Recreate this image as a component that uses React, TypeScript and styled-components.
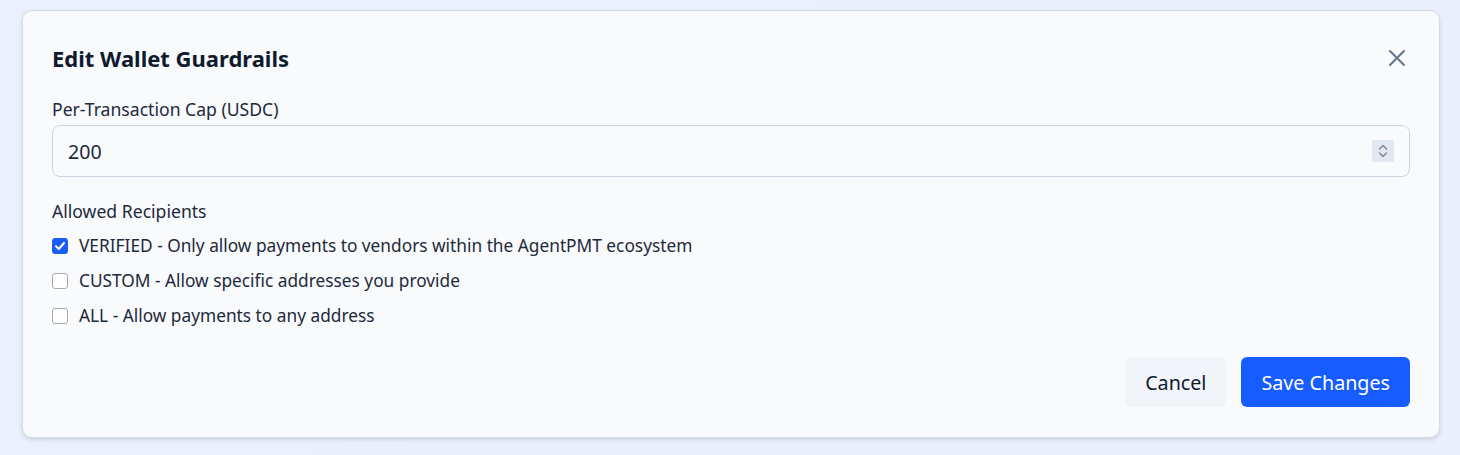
import styled, { createGlobalStyle } from 'styled-components';

const GlobalStyle = createGlobalStyle`
  html, body {
    margin: 0;
    padding: 0;
  }
  body {
    font-family: 'Noto Sans', 'Open Sans', sans-serif;
    background: linear-gradient(135deg, #eaf1fd 0%, #e9effb 100%);
    width: 1460px;
    height: 455px;
    overflow: hidden;
  }
`;

const Page = styled.div`
  padding: 10px 20px 0 22px;
`;

const Card = styled.div`
  box-sizing: border-box;
  width: 1418px;
  height: 428px;
  background: #f8fafc;
  border: 1px solid #d5dbe4;
  border-radius: 10px;
  box-shadow: 0 2px 4px rgba(15, 23, 42, 0.12);
  padding: 29px 29px 30px;
  display: flex;
  flex-direction: column;
`;

const Header = styled.div`
  display: flex;
  align-items: center;
  justify-content: space-between;
  height: 36px;
`;

const Title = styled.h2`
  margin: 0;
  font-size: 22px;
  font-weight: 700;
  color: #0f1a2e;
`;

const CloseButton = styled.button`
  border: none;
  background: none;
  padding: 0;
  margin-right: 3px;
  width: 20px;
  height: 20px;
  display: flex;
  align-items: center;
  justify-content: center;
  cursor: pointer;
`;

const Label = styled.div`
  margin-top: 21px;
  font-size: 17.6px;
  color: #1e293b;
  line-height: 24px;
`;

const InputWrap = styled.div`
  margin-top: 4px;
  height: 52px;
  box-sizing: border-box;
  border: 1px solid #cbd5e1;
  border-radius: 8px;
  background: #f8fafc;
  display: flex;
  align-items: center;
  padding: 0 15px;
`;

const NumberText = styled.div`
  flex: 1;
  font-size: 19.6px;
  color: #1e293b;
`;

const Spinner = styled.div`
  width: 22px;
  height: 22px;
  background: #e2e8f0;
  display: flex;
  align-items: center;
  justify-content: center;
`;

const SectionLabel = styled(Label)`
  margin-top: 22px;
`;

const Options = styled.div`
  margin-top: 11px;
  display: flex;
  flex-direction: column;
  gap: 11px;
`;

const Option = styled.label`
  display: flex;
  align-items: center;
  gap: 11px;
  font-size: 17.3px;
  color: #1e293b;
  line-height: 24px;
`;

const Box = styled.span<{ $checked?: boolean }>`
  box-sizing: border-box;
  width: 16px;
  height: 16px;
  border-radius: 3px;
  border: 1px solid ${(p) => (p.$checked ? '#1a5cf5' : '#a3aab5')};
  background: ${(p) => (p.$checked ? '#1a5cf5' : '#ffffff')};
  display: flex;
  align-items: center;
  justify-content: center;
`;

const Footer = styled.div`
  margin-top: auto;
  display: flex;
  justify-content: flex-end;
  gap: 15px;
`;

const Button = styled.button<{ $primary?: boolean }>`
  height: 50px;
  border: none;
  border-radius: 6px;
  padding: 0 20px;
  font-family: inherit;
  font-size: 19.7px;
  color: ${(p) => (p.$primary ? '#ffffff' : '#0f1a2e')};
  background: ${(p) => (p.$primary ? '#165cff' : '#f1f5f9')};
  cursor: pointer;
`;

const options = [
  { text: 'VERIFIED - Only allow payments to vendors within the AgentPMT ecosystem', checked: true },
  { text: 'CUSTOM - Allow specific addresses you provide', checked: false },
  { text: 'ALL - Allow payments to any address', checked: false },
];

export default function App() {
  return (
    <>
      <GlobalStyle />
      <Page>
        <Card>
          <Header>
            <Title>Edit Wallet Guardrails</Title>
            <CloseButton aria-label="Close">
              <svg width="18" height="18" viewBox="0 0 18 18" fill="none">
                <path d="M2 2L16 16M16 2L2 16" stroke="#64748b" strokeWidth="2" strokeLinecap="round" />
              </svg>
            </CloseButton>
          </Header>
          <Label>Per-Transaction Cap (USDC)</Label>
          <InputWrap>
            <NumberText>200</NumberText>
            <Spinner>
              <svg width="12" height="18" viewBox="0 0 12 18" fill="none">
                <path d="M2.5 7L6 3.5L9.5 7M2.5 11L6 14.5L9.5 11" stroke="#7c8594" strokeWidth="1.4" strokeLinecap="round" strokeLinejoin="round" />
              </svg>
            </Spinner>
          </InputWrap>
          <SectionLabel>Allowed Recipients</SectionLabel>
          <Options>
            {options.map((o) => (
              <Option key={o.text}>
                <Box $checked={o.checked}>
                  {o.checked && (
                    <svg width="12" height="12" viewBox="0 0 12 12" fill="none">
                      <path d="M2 6.2L4.8 9L10 3" stroke="#ffffff" strokeWidth="2" strokeLinecap="round" strokeLinejoin="round" />
                    </svg>
                  )}
                </Box>
                {o.text}
              </Option>
            ))}
          </Options>
          <Footer>
            <Button>Cancel</Button>
            <Button $primary>Save Changes</Button>
          </Footer>
        </Card>
      </Page>
    </>
  );
}
